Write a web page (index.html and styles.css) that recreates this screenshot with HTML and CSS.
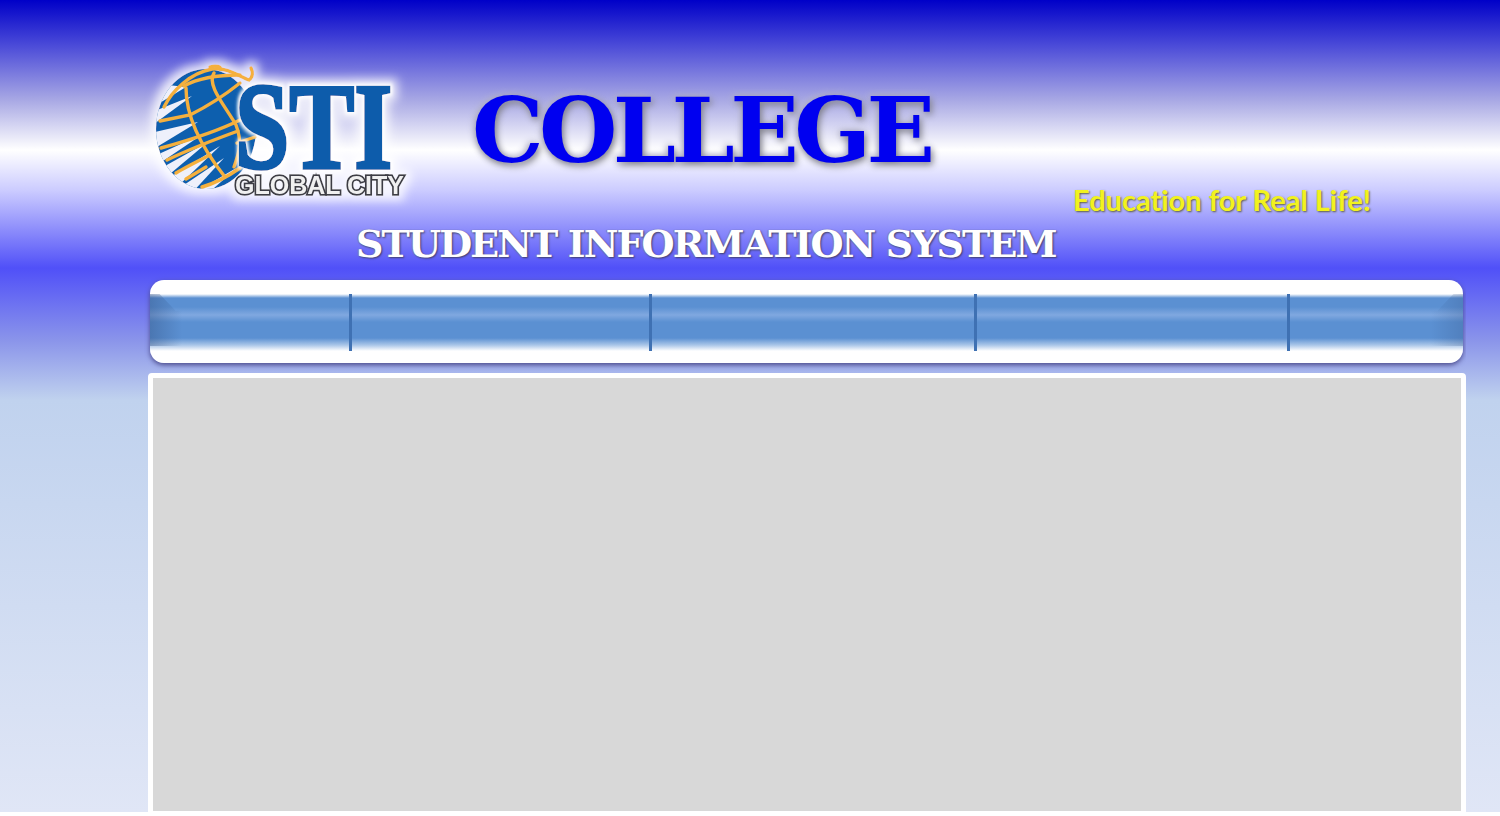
FILE: index.html
```html
<!DOCTYPE html>
<html lang="en">
<head>
  <meta charset="UTF-8" />
  <title>STI College Global City - Student Information System</title>
  <link rel="stylesheet" href="styles.css">
</head>
<body>

  <header class="banner">
    <div class="banner-top">
      <svg class="logo" viewBox="0 0 280 165" width="280" height="165" aria-label="STI Global City">
        <defs>
          <filter id="halo" x="-15%" y="-15%" width="130%" height="130%">
            <feMorphology in="SourceAlpha" operator="dilate" radius="5" />
            <feGaussianBlur stdDeviation="5" result="glow" />
            <feFlood flood-color="#fff" flood-opacity="0.8" />
            <feComposite in2="glow" operator="in" />
            <feMerge>
              <feMergeNode />
              <feMergeNode in="SourceGraphic" />
            </feMerge>
          </filter>
          <filter id="glow" x="-10%" y="-10%" width="120%" height="120%">
            <feMorphology in="SourceAlpha" operator="dilate" radius="2" />
            <feGaussianBlur stdDeviation="2" result="glow" />
            <feFlood flood-color="#fff" />
            <feComposite in2="glow" operator="in" />
            <feMerge>
              <feMergeNode />
              <feMergeNode in="SourceGraphic" />
            </feMerge>
          </filter>
          <clipPath id="globeClip">
            <ellipse cx="66" cy="84" rx="50" ry="60" />
          </clipPath>
        </defs>
        <g filter="url(#halo)">
          <!-- globe -->
          <g clip-path="url(#globeClip)">
            <rect x="0" y="20" width="130" height="130" fill="#0f5fae" />
            <g fill="#eef0fb">
              <path d="M46 42 L10 38 L10 64 Z" />
              <path d="M52 51 L10 68 L10 82 Z" />
              <path d="M58 77 L10 88 L10 106 Z" />
              <path d="M63 89 L10 113 L14 122 Z" />
              <path d="M68 97 L14 127 L24 134 Z" />
              <path d="M80 101 L24 136 L36 143 Z" />
              <path d="M84 113 L38 144 L50 150 Z" />
              <path d="M98 122 L50 150 L66 150 Z" />
            </g>
          </g>
          <g stroke="#f5b03e" stroke-width="3.4" fill="none" stroke-linecap="round">
            <path d="M24 62 C32 46 50 28 72 24 C88 22 100 32 109 35 C113 32 113 27 111 23" />
            <path d="M70 22 C76 20 82 22 80 24" />
            <path d="M44 41 C60 32 82 30 100 30" />
            <path d="M46 43 C46 70 58 98 85 132" />
            <path d="M74 28 C66 40 86 62 96 80 C102 96 100 106 94 122" />
            <path d="M20 76 L50 70 C70 60 85 50 100 38" />
            <path d="M21 103 C50 95 80 85 100 75" />
            <path d="M27 115 C50 104 76 94 98 86" />
            <path d="M97 98 L115 92" />
            <path d="M36 128 C46 122 58 116 70 110" />
            <path d="M62 142 C76 138 90 130 100 123" />
            <path d="M46 134 L66 122" />
          </g>
          <text class="logo-sti" transform="translate(95 123) scale(0.8 1)" filter="url(#glow)">STI</text>
          <text class="logo-city" x="95" y="149">GLOBAL CITY</text>
        </g>
      </svg>
      <div class="college">COLLEGE</div>
    </div>
    <div class="tagline">Education for Real Life!</div>
    <div class="system-name">STUDENT INFORMATION SYSTEM</div>
  </header>

  <nav class="menu">
    <div class="menu-item menu-first"></div>
    <div class="menu-item menu-second"></div>
    <div class="menu-item menu-third"></div>
    <div class="menu-item menu-fourth"></div>
    <div class="menu-item menu-last"></div>
  </nav>

  <main class="panel"></main>

</body>
</html>
```
FILE: styles.css
```css
* {
  margin: 0;
  padding: 0;
  box-sizing: border-box;
  font-family: "Liberation Serif", serif;
}

html, body {
  height: 812px;
  overflow: hidden;
}

body {
  background-color: #fff;
  background-image: linear-gradient(to bottom,
    #0000c8 0,
    #4a4ad8 45px,
    #a8a8e4 100px,
    #ffffff 150px,
    #ccccff 190px,
    #5050f8 268px,
    #8a94ea 340px,
    #c0d2ee 400px,
    #e0e6f6 812px);
  background-size: 100% 812px;
  background-repeat: no-repeat;
  padding-left: 148px;
  width: 1466px;
}

.banner {
  height: 280px;
  padding-top: 45px;
}

.banner-top {
  display: flex;
  height: 135px;
}

.logo {
  flex: none;
  margin-left: -8px;
}

.logo-sti {
  font-family: "Liberation Serif", serif;
  font-weight: bold;
  font-size: 122px;
  fill: #0b5cab;
  stroke: #0b5cab;
  stroke-width: 3.5px;
}

.logo-city {
  font-family: "Liberation Sans", sans-serif;
  font-weight: bold;
  font-size: 25px;
  fill: #f0f0f0;
  stroke: #3c3c44;
  stroke-width: 3.5px;
  paint-order: stroke;
}

.college {
  margin-left: 52px;
  padding-top: 28px;
  font-family: "DejaVu Serif", serif;
  font-size: 90px;
  line-height: 115px;
  font-weight: bold;
  letter-spacing: -4.6px;
  white-space: nowrap;
  color: #0000f0;
  text-shadow: 2px 3px 7px #80808a, -2px -1px 7px #b4b4cc;
}

.tagline {
  margin-left: 925px;
  margin-top: 1px;
  height: 40px;
  font-family: "Lato", sans-serif;
  font-size: 29px;
  line-height: 38px;
  font-weight: bold;
  font-variant-ligatures: none;
  white-space: nowrap;
  color: #f2f21e;
  text-shadow: 1px 1px 2px #5e5e40;
}

.system-name {
  margin-left: 208px;
  font-family: "DejaVu Serif", serif;
  font-size: 38px;
  line-height: 46px;
  font-weight: bold;
  letter-spacing: -1.9px;
  white-space: nowrap;
  color: #fff;
  text-shadow: 1px 1px 2px #40406a, -1px 0 1px #8080b0;
}

.menu {
  display: flex;
  position: relative;
  overflow: hidden;
  width: 1313px;
  height: 83px;
  margin-left: 2px;
  padding: 14px 0 13px;
  border-radius: 14px;
  box-shadow: 0 2px 5px #4a4a8a;
  background: linear-gradient(to bottom,
    #fff 0,
    #fff 14px,
    #5b90d2 18px,
    #5b90d2 27px,
    #80a8e0 35px,
    #5b90d2 42px,
    #5b90d2 58px,
    #a9c5e8 65px,
    #fff 71px,
    #fff 83px);
}

/* dark ends of the glass bar */
.menu::before,
.menu::after {
  content: "";
  position: absolute;
  top: 14px;
  width: 32px;
  height: 52px;
}

.menu::before {
  left: 0;
  clip-path: polygon(0 0, 30% 0, 80% 32%, 100% 32%, 100% 100%, 0 100%);
  background: linear-gradient(to right, rgba(50, 80, 130, 0.4), rgba(90, 144, 210, 0));
}

.menu::after {
  right: 0;
  clip-path: polygon(100% 0, 70% 0, 20% 32%, 0 32%, 0 100%, 100% 100%);
  background: linear-gradient(to left, rgba(50, 80, 130, 0.25), rgba(90, 144, 210, 0));
}

.menu-item {
  height: 57px;
  border-right: 3px solid #3f71b3;
}

.menu-first { width: 202px; }
.menu-second { width: 300px; }
.menu-third { width: 325px; }
.menu-fourth { width: 313px; }

.menu-last {
  flex: 1;
  border-right: none;
}

.panel {
  width: 1318px;
  height: 439px;
  margin-top: 10px;
  border: 5px solid #fff;
  border-bottom-width: 1px;
  border-radius: 4px 4px 0 0;
  background: #d8d8d8;
}
```
